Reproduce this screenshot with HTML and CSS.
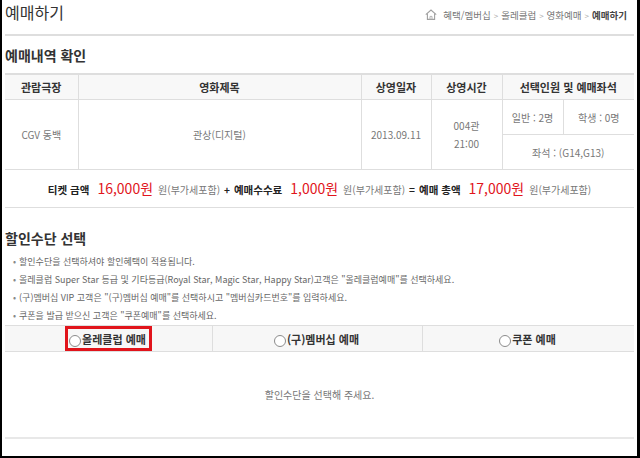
FILE: index.html
```html
<!DOCTYPE html>
<html lang="ko">
<head>
  <meta charset="UTF-8">
  <meta name="viewport" content="width=device-width, initial-scale=1.0">
  <title>예매하기</title>
  <link rel="stylesheet" href="styles.css">
</head>
<body>
  <div class="frame">
    <div class="page">
      <!-- 상단 타이틀 -->
      <div class="top">
        <h1 class="title">예매하기</h1>
        <div class="path">
          <svg class="home" width="12" height="11" viewBox="0 0 12 11">
            <path d="M0.8 5.6 L6 1 L11.2 5.6" fill="none" stroke="#a0a0a0" stroke-width="1.1"/>
            <path d="M2.4 4.6 V10.4 H9.6 V4.6" fill="none" stroke="#a0a0a0" stroke-width="1.1"/>
            <path d="M5 10.4 V7.4 H7 V10.4" fill="none" stroke="#b5b5b5" stroke-width="1"/>
          </svg>
          혜택/멤버십<span class="sep">&gt;</span>올레클럽<span class="sep">&gt;</span>영화예매<span class="sep">&gt;</span><strong>예매하기</strong>
        </div>
      </div>

      <!-- 예매내역 -->
      <h2 class="sub">예매내역 확인</h2>
      <table class="info">
        <colgroup>
          <col class="c-theater">
          <col class="c-movie">
          <col class="c-date">
          <col class="c-time">
          <col class="c-adult">
          <col class="c-student">
        </colgroup>
        <thead>
          <tr>
            <th>관람극장</th>
            <th>영화제목</th>
            <th>상영일자</th>
            <th>상영시간</th>
            <th colspan="2">선택인원 및 예매좌석</th>
          </tr>
        </thead>
        <tbody>
          <tr>
            <td rowspan="2">CGV 동백</td>
            <td rowspan="2">관상(디지털)</td>
            <td rowspan="2">2013.09.11</td>
            <td rowspan="2" class="time">004관<br>21:00</td>
            <td>일반 : 2명</td>
            <td>학생 : 0명</td>
          </tr>
          <tr>
            <td colspan="2">좌석 : (G14,G13)</td>
          </tr>
        </tbody>
      </table>
      <div class="total">
        <b>티켓 금액</b><em class="won">16,000원</em><span class="vat">원(부가세포함)</span><i class="op">+</i><b>예매수수료</b><em class="won">1,000원</em><span class="vat">원(부가세포함)</span><i class="op">=</i><b>예매 총액</b><em class="won">17,000원</em><span class="vat">원(부가세포함)</span>
      </div>

      <!-- 할인수단 -->
      <h2 class="sub sub-discount">할인수단 선택</h2>
      <ul class="notes">
        <li>할인수단을 선택하셔야 할인혜택이 적용됩니다.</li>
        <li>올레클럽 Super Star 등급 및 기타등급(Royal Star, Magic Star, Happy Star)고객은 "올레클럽예매"를 선택하세요.</li>
        <li>(구)멤버십 VIP 고객은 "(구)멤버십 예매"를 선택하시고 "멤버십카드번호"를 입력하세요.</li>
        <li>쿠폰을 발급 받으신 고객은 "쿠폰예매"를 선택하세요.</li>
      </ul>
      <div class="tabs">
        <div class="tab tab-olleh"><label class="opt opt-on"><span class="radio"></span>올레클럽 예매</label></div>
        <div class="tab tab-member"><label class="opt"><span class="radio"></span>(구)멤버십 예매</label></div>
        <div class="tab tab-coupon"><label class="opt"><span class="radio"></span>쿠폰 예매</label></div>
      </div>
      <div class="empty">할인수단을 선택해 주세요.</div>
    </div>
  </div>
</body>
</html>
```

FILE: styles.css
```css
body {
  margin: 0;
  background: #fff;
  font-family: "Noto Sans CJK KR", "Noto Sans", sans-serif;
  color: #666;
}
.frame {
  width: 640px;
  height: 458px;
  box-sizing: border-box;
  border-left: 2px solid #000;
  border-right: 3px solid #000;
  border-bottom: 2px solid #000;
  overflow: hidden;
}
.page {
  padding: 0 3px;
}

/* 상단 */
.top {
  display: flex;
  justify-content: space-between;
  align-items: baseline;
  height: 34px;
  border-bottom: 2px solid #dedede;
}
.title {
  margin: 0;
  font-size: 16px;
  font-weight: normal;
  line-height: 24px;
  color: #333;
}
.path {
  padding-right: 7px;
  font-size: 9.5px;
  color: #777;
}
.path strong {
  color: #444;
}
.home {
  vertical-align: -1px;
  margin-right: 4px;
}
.sep {
  margin: 0 3px;
  color: #aaa;
  font-size: 8px;
}

/* 제목 */
.sub {
  margin: 9px 0 8px;
  font-size: 14px;
  line-height: 20px;
  color: #333;
}
.sub-discount {
  margin: 20px 0 5px;
}

/* 예매내역 테이블 */
.info {
  width: 629px;
  table-layout: fixed;
  border-collapse: collapse;
  border-top: 2px solid #dedede;
}
.c-theater { width: 73px; }
.c-movie { width: 283px; }
.c-date { width: 70px; }
.c-time { width: 71px; }
.c-adult { width: 61px; }
.c-student { width: 71px; }
.info th,
.info td {
  padding: 0;
  text-align: center;
  border: 1px solid #dedede;
  border-top: 0;
}
.info th:first-child,
.info td:first-child {
  border-left: 0;
}
.info th:last-child,
.info tr:first-child td:last-child,
.info tr + tr td {
  border-right: 0;
}
.info th {
  height: 24px;
  background: #f8f8f8;
  font-size: 11px;
  color: #333;
}
.info td {
  height: 34px;
  font-size: 10px;
  color: #777;
}
.info tr + tr td {
  border-top: 1px solid #dedede;
}
.info .time {
  line-height: 18px;
}

/* 금액 */
.total {
  height: 37px;
  line-height: 37px;
  text-align: center;
  border-bottom: 1px solid #dedede;
  font-size: 10px;
}
.total b {
  font-size: 10.5px;
  color: #222;
}
.won {
  margin: 0 5px 0 8px;
  font-style: normal;
  font-size: 14px;
  color: #e1141b;
}
.vat {
  color: #777;
}
.op {
  margin: 0 4px;
  font-style: normal;
  font-weight: bold;
  color: #222;
}

/* 안내 */
.notes {
  margin: 0;
  padding: 0 0 0 8px;
  list-style: none;
}
.notes li {
  font-size: 9px;
  line-height: 18px;
  color: #666;
}
.notes li::before {
  content: "•";
  margin-right: 3px;
  color: #888;
}

/* 할인수단 탭 */
.tabs {
  display: flex;
  border-top: 1px solid #dedede;
  border-bottom: 1px solid #dedede;
  background: #f7f7f7;
}
.tab {
  display: flex;
  justify-content: center;
  height: 25px;
}
.tab-olleh {
  width: 207px;
}
.tab-member {
  width: 209px;
}
.tab-coupon {
  flex: 1;
}
.tab + .tab {
  border-left: 1px solid #dedede;
}
.opt {
  display: flex;
  align-items: center;
  box-sizing: border-box;
  height: 25px;
  padding: 0 3px 0 1px;
  border: 3px solid transparent;
  font-size: 11px;
  font-weight: bold;
  color: #333;
}
.opt-on {
  border-color: #e1141b;
}
.radio {
  width: 10px;
  height: 10px;
  margin: 4px 1px 0 0;
  border: 1px solid #8c8c8c;
  border-radius: 50%;
  background: #fff;
}

.empty {
  height: 85px;
  line-height: 85px;
  text-align: center;
  font-size: 10px;
  color: #777;
  border-bottom: 2px solid #e8e8e8;
}
```
